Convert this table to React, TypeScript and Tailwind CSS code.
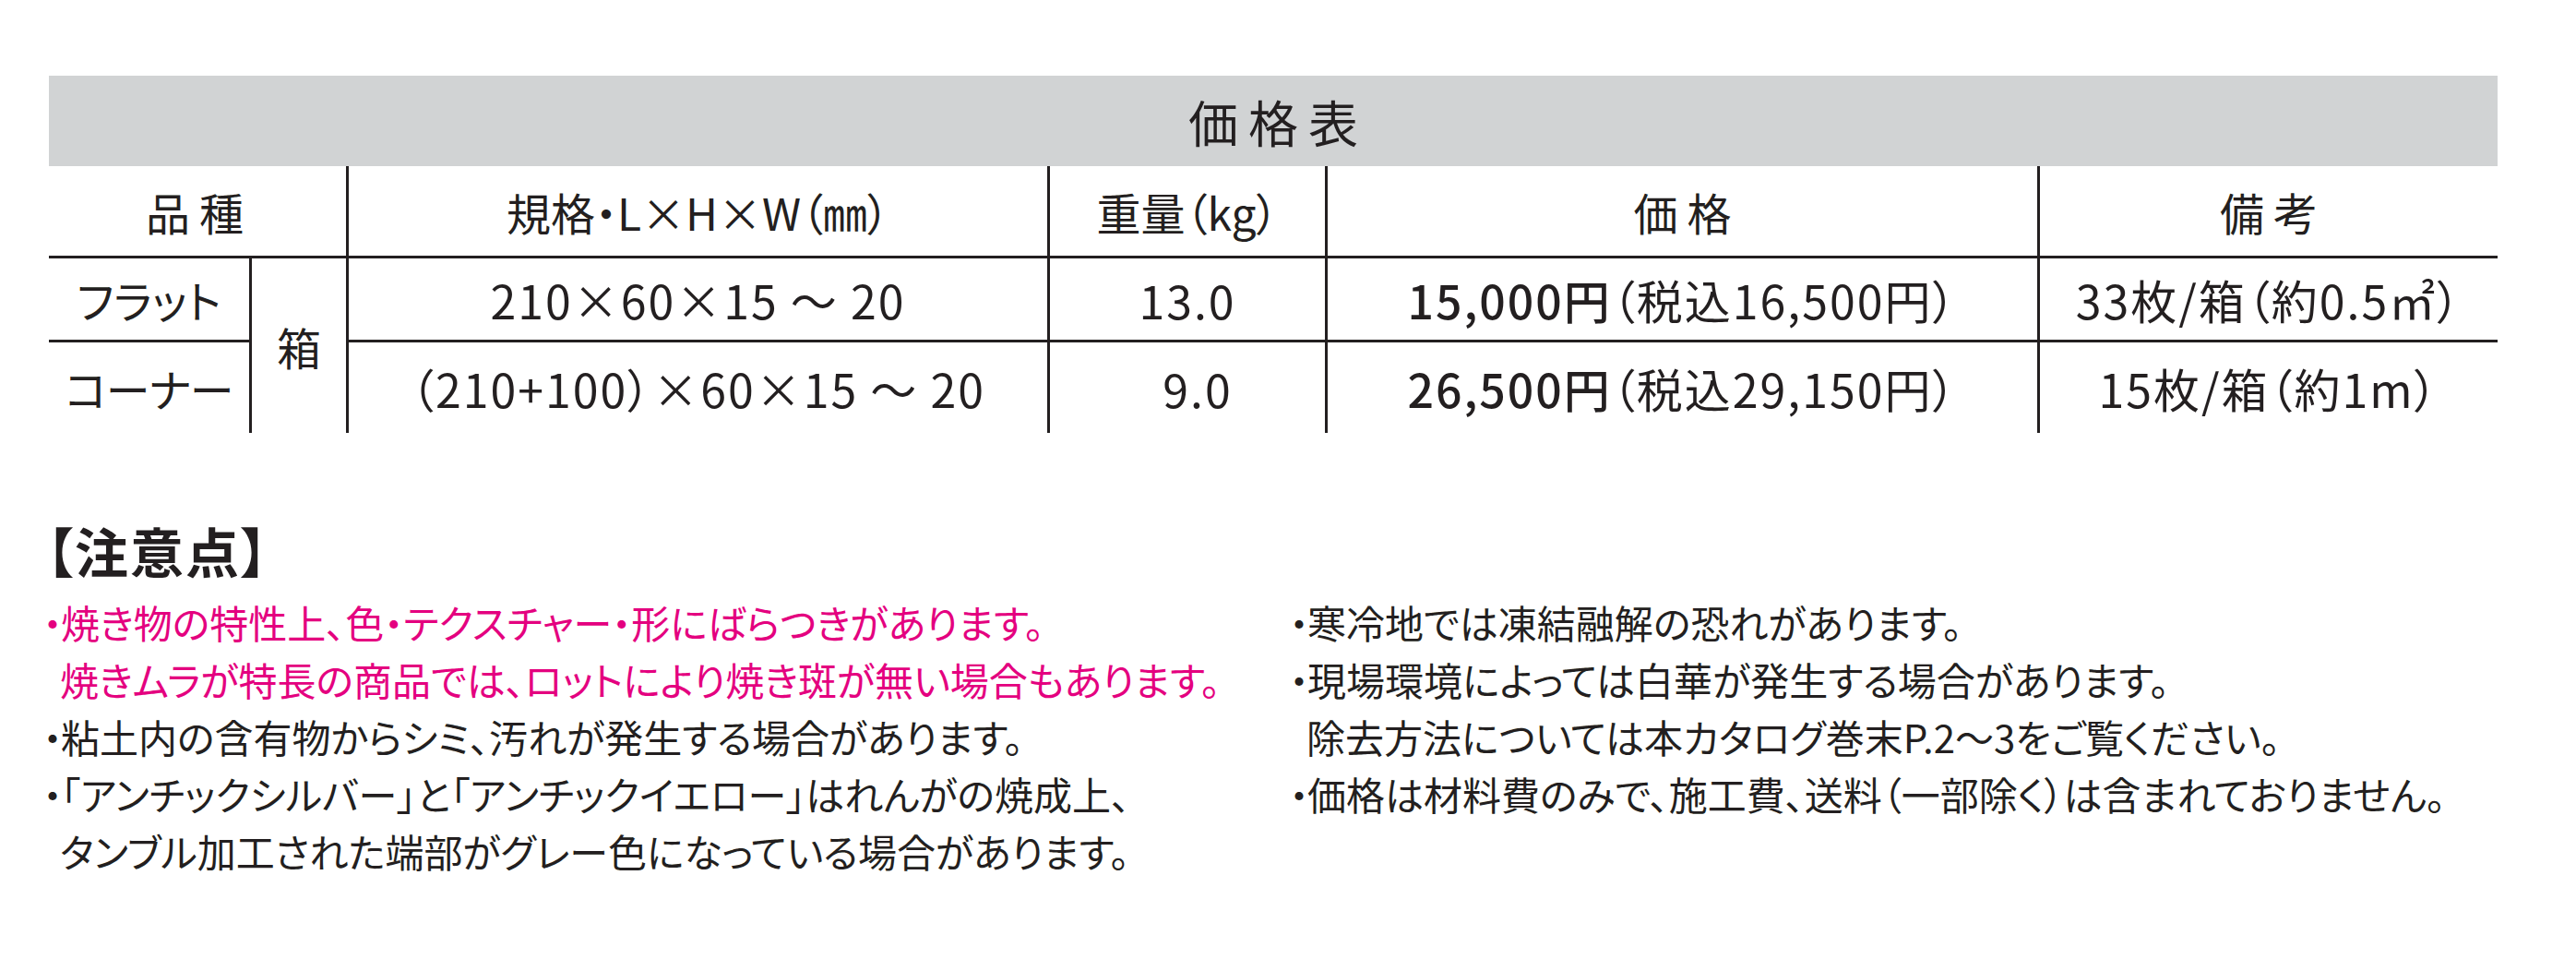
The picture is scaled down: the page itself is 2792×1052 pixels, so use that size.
import React from "react";

const ink = "text-[#231f20]";

function Bullet({ children, pink }: { children: React.ReactNode; pink?: boolean }) {
    return (
        <div className={`flex ${pink ? "text-[#e4007f]" : ink}`}>
            <span className="w-[18px] flex justify-center shrink-0">・</span>
            <span className="whitespace-nowrap">{children}</span>
        </div>
    );
}

function Cont({ children, pink }: { children: React.ReactNode; pink?: boolean }) {
    return (
        <div className={`pl-[17px] whitespace-nowrap ${pink ? "text-[#e4007f]" : ink}`}>{children}</div>
    );
}

export default function App() {
    return (
        <div className={`w-[2792px] h-[1052px] bg-white overflow-hidden font-['Noto_Sans_CJK_JP',sans-serif] [font-feature-settings:'palt'] ${ink}`}>
            {/* price table */}
            <div className="ml-[53px] w-[2654px] mt-[82px]">
                <div className="h-[98px] bg-[#d1d3d4] flex items-center justify-center text-[54px] tracking-[11px] pl-[11px]">
                    価格表
                </div>

                <div className="flex h-[100px] border-b-[3px] border-[#231f20] text-[48px]">
                    <div className="w-[325px] border-r-[3px] border-[#231f20] flex items-center justify-center tracking-[10px] pl-[4px]">
                        品種
                    </div>
                    <div className="w-[760px] border-r-[3px] border-[#231f20] flex items-center justify-center">
                        規格・L×H×W（㎜）
                    </div>
                    <div className="w-[301px] border-r-[3px] border-[#231f20] flex items-center justify-center">
                        重量（kg）
                    </div>
                    <div className="w-[772px] border-r-[3px] border-[#231f20] flex items-center justify-center tracking-[10px] pl-[10px]">
                        価格
                    </div>
                    <div className="flex-1 flex items-center justify-center tracking-[10px] pl-[10px]">
                        備考
                    </div>
                </div>

                <div className="flex text-[50px] tracking-[2px]">
                    <div className="w-[220px] border-r-[3px] border-[#231f20]">
                        <div className="h-[91px] border-b-[3px] border-[#231f20] flex items-center justify-center text-[48px] tracking-normal">
                            フラット
                        </div>
                        <div className="h-[98px] flex items-center justify-center text-[48px] tracking-[-1px]">
                            コーナー
                        </div>
                    </div>
                    <div className="w-[105px] border-r-[3px] border-[#231f20] flex items-center justify-center text-[48px] tracking-normal">
                        箱
                    </div>
                    <div className="flex-1">
                        <div className="flex h-[91px] border-b-[3px] border-[#231f20]">
                            <div className="w-[760px] border-r-[3px] border-[#231f20] flex items-center justify-center">
                                210×60×15 ～ 20
                            </div>
                            <div className="w-[301px] border-r-[3px] border-[#231f20] flex items-center justify-center">
                                13.0
                            </div>
                            <div className="w-[772px] border-r-[3px] border-[#231f20] flex items-center justify-center">
                                <span className="font-medium">15,000円</span>
                                <span>（税込16,500円）</span>
                            </div>
                            <div className="flex-1 flex items-center justify-center">
                                33枚/箱（約0.5㎡）
                            </div>
                        </div>
                        <div className="flex h-[98px]">
                            <div className="w-[760px] border-r-[3px] border-[#231f20] flex items-center justify-center">
                                （210+100）×60×15 ～ 20
                            </div>
                            <div className="w-[301px] border-r-[3px] border-[#231f20] flex items-center justify-center pl-[22px]">
                                9.0
                            </div>
                            <div className="w-[772px] border-r-[3px] border-[#231f20] flex items-center justify-center">
                                <span className="font-medium">26,500円</span>
                                <span>（税込29,150円）</span>
                            </div>
                            <div className="flex-1 flex items-center justify-center">
                                15枚/箱（約1m）
                            </div>
                        </div>
                    </div>
                </div>
            </div>

            {/* notes */}
            <div className="ml-[50px] mt-[98px] text-[58px] font-bold leading-none h-[58px] tracking-[2px]">【注意点】</div>

            <div className="ml-[48px] mt-[18px] flex text-[42px] leading-[62px]">
                <div className="w-[1351px]">
                    <Bullet pink>焼き物の特性上、色・テクスチャー・形にばらつきがあります。</Bullet>
                    <Cont pink>焼きムラが特長の商品では、ロットにより焼き斑が無い場合もあります。</Cont>
                    <Bullet>粘土内の含有物からシミ、汚れが発生する場合があります。</Bullet>
                    <Bullet>「アンチックシルバー」と「アンチックイエロー」はれんがの焼成上、</Bullet>
                    <Cont>タンブル加工された端部がグレー色になっている場合があります。</Cont>
                </div>
                <div className="flex-1">
                    <Bullet>寒冷地では凍結融解の恐れがあります。</Bullet>
                    <Bullet>現場環境によっては白華が発生する場合があります。</Bullet>
                    <Cont>除去方法については本カタログ巻末P.2～3をご覧ください。</Cont>
                    <Bullet>価格は材料費のみで、施工費、送料（一部除く）は含まれておりません。</Bullet>
                </div>
            </div>
        </div>
    );
}
